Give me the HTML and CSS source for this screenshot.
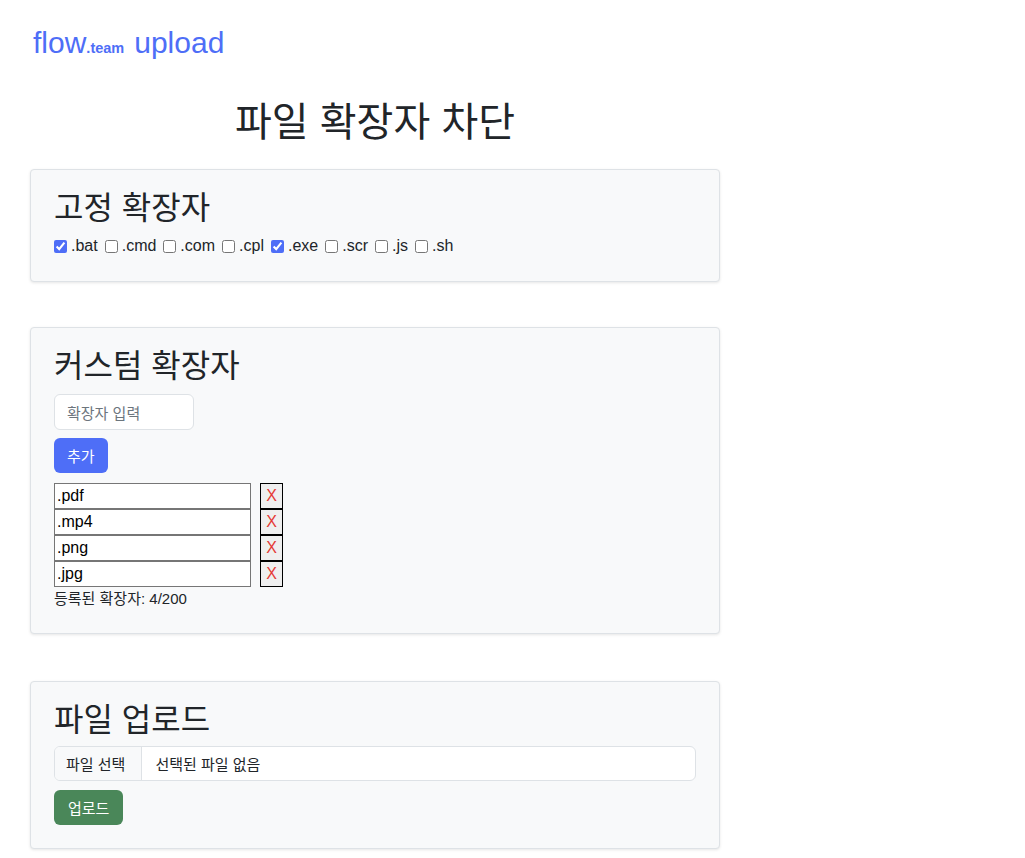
FILE: index.html
```html
<!DOCTYPE html>
<html lang="ko">
<head>
<meta charset="utf-8">
<title>flow.team upload</title>
<link rel="stylesheet" href="styles.css">
</head>
<body>
<header class="brand">
  <span class="brand-flow">flow<span class="brand-team">.team</span></span>
  <span class="brand-upload">upload</span>
</header>
<main class="container">
  <h1 class="page-title">파일 확장자 차단</h1>

  <section class="card">
    <h2 class="card-title">고정 확장자</h2>
    <div class="fixed-list">
      <label class="fixed-item"><input type="checkbox" checked>.bat</label>
      <label class="fixed-item"><input type="checkbox">.cmd</label>
      <label class="fixed-item"><input type="checkbox">.com</label>
      <label class="fixed-item"><input type="checkbox">.cpl</label>
      <label class="fixed-item"><input type="checkbox" checked>.exe</label>
      <label class="fixed-item"><input type="checkbox">.scr</label>
      <label class="fixed-item"><input type="checkbox">.js</label>
      <label class="fixed-item"><input type="checkbox">.sh</label>
    </div>
  </section>

  <section class="card card-custom">
    <h2 class="card-title">커스텀 확장자</h2>
    <input class="ext-input" type="text" placeholder="확장자 입력">
    <div><button class="btn btn-blue" type="button">추가</button></div>
    <ul class="custom-list">
      <li class="custom-row"><input class="custom-field" type="text" value=".pdf" readonly><button class="del-btn" type="button">X</button></li>
      <li class="custom-row"><input class="custom-field" type="text" value=".mp4" readonly><button class="del-btn" type="button">X</button></li>
      <li class="custom-row"><input class="custom-field" type="text" value=".png" readonly><button class="del-btn" type="button">X</button></li>
      <li class="custom-row"><input class="custom-field" type="text" value=".jpg" readonly><button class="del-btn" type="button">X</button></li>
    </ul>
    <div class="count">등록된 확장자: 4/200</div>
  </section>

  <section class="card">
    <h2 class="card-title">파일 업로드</h2>
    <div class="file-box">
      <span class="file-btn">파일 선택</span>
      <span class="file-name">선택된 파일 없음</span>
    </div>
    <div><button class="btn btn-green" type="button">업로드</button></div>
  </section>
</main>
</body>
</html>
```
FILE: styles.css
```css
html, body {
  margin: 0;
  padding: 0;
  background: #fff;
}
body {
  font-family: "Liberation Sans", Arial, "Noto Sans CJK KR", sans-serif;
  color: #212529;
  font-size: 16px;
}
.brand {
  padding: 26px 0 0 33px;
  height: 41px;
  color: #4e6ef7;
  display: flex;
  align-items: baseline;
  gap: 10px;
}
.brand-flow {
  font-size: 30px;
}
.brand-team {
  font-size: 14.5px;
  font-weight: bold;
}
.brand-upload {
  font-size: 30px;
}
.container {
  width: 690px;
  margin-left: 30px;
}
.page-title {
  font-family: "Noto Sans CJK KR", sans-serif;
  font-weight: 400;
  font-size: 40px;
  line-height: 48px;
  text-align: center;
  margin: 28px 0 26px;
  color: #212529;
}
.card {
  background: #f8f9fa;
  border: 1px solid #dee2e6;
  border-radius: 4px;
  box-shadow: 0 1px 3px rgba(0,0,0,0.1);
  padding: 16px 23px 23px;
  margin-bottom: 45px;
}
.card-custom {
  margin-bottom: 47px;
}
.card-title {
  font-family: "Noto Sans CJK KR", sans-serif;
  font-weight: 400;
  font-size: 32px;
  line-height: 38px;
  margin: 0 0 10px;
}
.fixed-list {
  display: flex;
  flex-wrap: wrap;
  gap: 0 7px;
  font-size: 16px;
  line-height: 24px;
}
.fixed-item {
  display: flex;
  align-items: center;
}
.fixed-item input {
  margin: 0 4px 0 0;
  width: 13px;
  height: 13px;
  accent-color: #4e6ef7;
}
.ext-input {
  display: block;
  box-sizing: border-box;
  width: 140px;
  height: 36px;
  margin: 12px 0 8px;
  padding: 0 12px;
  border: 1px solid #dee2e6;
  border-radius: 6px;
  background: #fff;
  font-family: "Noto Sans CJK KR", sans-serif;
  font-size: 15px;
}
.ext-input::placeholder {
  color: #6c757d;
}
.btn {
  display: block;
  font-family: "Noto Sans CJK KR", sans-serif;
  font-size: 15px;
  color: #fff;
  border: none;
  border-radius: 6px;
  height: 35px;
  padding: 0 13px;
}
.btn-blue {
  background: #4e6ef7;
}
.btn-green {
  background: #4a8759;
  padding: 0 14px;
}
.custom-list {
  list-style: none;
  margin: 10px 0 0;
  padding: 0;
}
.custom-row {
  display: flex;
  align-items: stretch;
  gap: 9px;
  height: 26px;
}
.custom-field {
  box-sizing: border-box;
  width: 197px;
  height: 26px;
  margin: 0;
  padding: 0 2px;
  border: 1px solid #767676;
  font-family: "Liberation Sans", Arial, sans-serif;
  font-size: 16px;
  color: #000;
  background: #fff;
  outline: none;
}
.del-btn {
  box-sizing: border-box;
  width: 23px;
  height: 26px;
  margin: 0;
  padding: 0;
  background: #efefef;
  border: 1px solid #000;
  color: #e53935;
  font-family: "Liberation Sans", Arial, sans-serif;
  font-size: 16px;
}
.count {
  font-size: 15px;
  line-height: 21px;
  margin: 1px 0 1px;
}
.file-box {
  display: flex;
  height: 35px;
  box-sizing: border-box;
  border: 1px solid #dee2e6;
  border-radius: 6px;
  background: #fff;
  overflow: hidden;
  margin: 10px 0 9px;
  font-family: "Noto Sans CJK KR", sans-serif;
  font-size: 15px;
}
.file-btn {
  background: #f8f9fa;
  border-right: 1px solid #dee2e6;
  padding: 0 16px 0 11px;
  display: flex;
  align-items: center;
}
.file-name {
  padding: 0 13px;
  display: flex;
  align-items: center;
}
```
